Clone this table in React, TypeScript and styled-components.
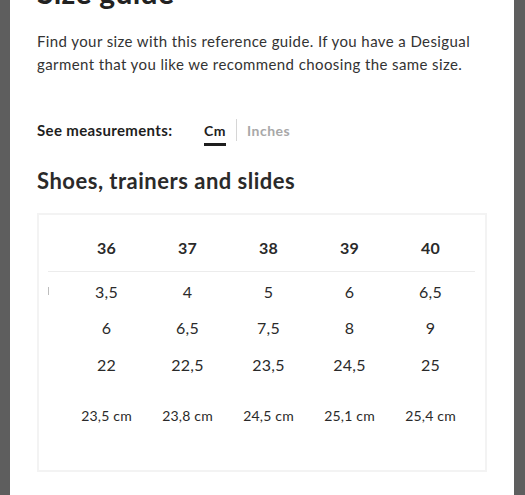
import { createGlobalStyle, styled } from "styled-components"

const GlobalStyle = createGlobalStyle`
  html, body {
    margin: 0;
    padding: 0;
    background: #5e5e5e;
    overflow: hidden;
  }
  * { box-sizing: border-box; }
`

const Sheet = styled.div`
  width: 504px;
  height: 495px;
  margin-left: 10px;
  background: #fff;
  padding: 0 27px;
  font-family: "Lato", "Noto Sans", sans-serif;
  color: #2b2b2b;
  overflow: hidden;
`

const Title = styled.h1`
  margin: -26px 0 0;
  font-size: 30px;
  line-height: 36px;
  font-weight: 700;
  letter-spacing: 0.3px;
  color: #222;
`

const Intro = styled.p`
  margin: 20px 0 0;
  font-size: 15px;
  line-height: 22.5px;
  letter-spacing: 0.4px;
  color: #333;
`

const Units = styled.div`
  display: flex;
  align-items: center;
  margin-top: 39px;
`

const UnitsLabel = styled.span`
  font-size: 15px;
  font-weight: 700;
  letter-spacing: 0.35px;
  color: #1e1e1e;
  width: 167px;
`

const Unit = styled.span<{ $active?: boolean }>`
  font-size: 14px;
  font-weight: 700;
  line-height: 20px;
  letter-spacing: 0.5px;
  padding-top: 2px;
  color: ${(p) => (p.$active ? "#1e1e1e" : "#a8a8a8")};
  border-bottom: 3px solid ${(p) => (p.$active ? "#1e1e1e" : "transparent")};
  padding-bottom: 2px;
  margin-top: 5px;
`

const Divider = styled.span`
  width: 1px;
  height: 22px;
  background: #d6d6d6;
  margin: 0 10px;
`

const Section = styled.h2`
  margin: 22px 0 0;
  font-size: 22px;
  line-height: 26px;
  font-weight: 700;
  letter-spacing: 0.5px;
  color: #2a2a2a;
`

const Chart = styled.div`
  margin-top: 19px;
  width: 450px;
  height: 259px;
  border: 2px solid #f3f3f3;
  padding: 9px 10px 0 9px;
`

const Row = styled.div<{ $head?: boolean; $small?: boolean }>`
  display: grid;
  grid-template-columns: 18px repeat(5, 81px);
  align-items: center;
  height: ${(p) => (p.$head ? "48px" : "36.5px")};
  margin-top: ${(p) => (p.$small ? "15px" : "0")};
  border-bottom: ${(p) => (p.$head ? "1px solid #ececec" : "none")};
  font-size: ${(p) => (p.$small ? "14px" : "16px")};
  font-weight: ${(p) => (p.$head ? 700 : 400)};
  letter-spacing: 0.2px;
  color: #2a2a2a;
  text-align: center;
`

const Body = styled.div`
  padding-top: 1px;
`

const Mark = styled.span`
  justify-self: start;
  width: 1px;
  height: 8px;
  background: #bdbdbd;
`

const sizes = ["36", "37", "38", "39", "40"]
const rows = [
  ["3,5", "4", "5", "6", "6,5"],
  ["6", "6,5", "7,5", "8", "9"],
  ["22", "22,5", "23,5", "24,5", "25"],
]
const lengths = ["23,5 cm", "23,8 cm", "24,5 cm", "25,1 cm", "25,4 cm"]

export default function App() {
  return (
    <>
      <GlobalStyle />
      <Sheet>
        <Title>Size guide</Title>
        <Intro>
          Find your size with this reference guide. If you have a Desigual garment that you like we recommend
          choosing the same size.
        </Intro>
        <Units>
          <UnitsLabel>See measurements:</UnitsLabel>
          <Unit $active>Cm</Unit>
          <Divider />
          <Unit>Inches</Unit>
        </Units>
        <Section>Shoes, trainers and slides</Section>
        <Chart>
          <Row $head>
            <span />
            {sizes.map((s) => (
              <span key={s}>{s}</span>
            ))}
          </Row>
          <Body>
            {rows.map((r, i) => (
              <Row key={i}>
                {i === 0 ? <Mark /> : <span />}
                {r.map((v, j) => (
                  <span key={j}>{v}</span>
                ))}
              </Row>
            ))}
            <Row $small>
              <span />
              {lengths.map((v) => (
                <span key={v}>{v}</span>
              ))}
            </Row>
          </Body>
        </Chart>
      </Sheet>
    </>
  )
}
